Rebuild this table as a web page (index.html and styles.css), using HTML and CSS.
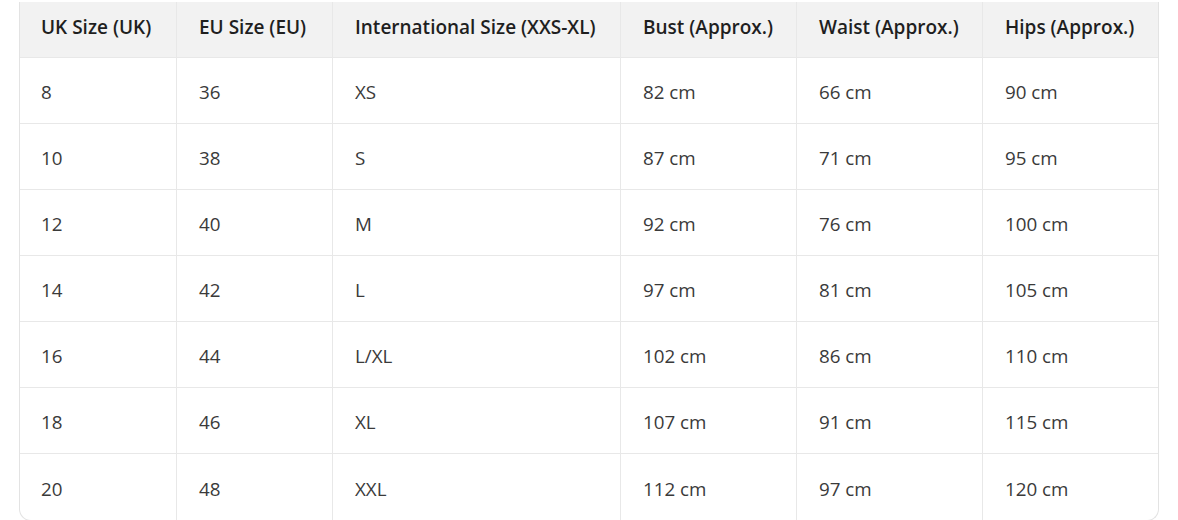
FILE: index.html
```html
<!DOCTYPE html>
<html>
<head>
<meta charset="utf-8">
<link rel="stylesheet" href="styles.css">
</head>
<body>
<div class="wrap">
  <table class="size-table">
    <colgroup>
      <col class="c1"><col class="c2"><col class="c3"><col class="c4"><col class="c5"><col class="c6">
    </colgroup>
    <thead>
      <tr><th>UK Size (UK)</th><th>EU Size (EU)</th><th>International Size (XXS-XL)</th><th>Bust (Approx.)</th><th>Waist (Approx.)</th><th>Hips (Approx.)</th></tr>
    </thead>
    <tbody>
      <tr><td>8</td><td>36</td><td>XS</td><td>82 cm</td><td>66 cm</td><td>90 cm</td></tr>
      <tr><td>10</td><td>38</td><td>S</td><td>87 cm</td><td>71 cm</td><td>95 cm</td></tr>
      <tr><td>12</td><td>40</td><td>M</td><td>92 cm</td><td>76 cm</td><td>100 cm</td></tr>
      <tr><td>14</td><td>42</td><td>L</td><td>97 cm</td><td>81 cm</td><td>105 cm</td></tr>
      <tr><td>16</td><td>44</td><td>L/XL</td><td>102 cm</td><td>86 cm</td><td>110 cm</td></tr>
      <tr><td>18</td><td>46</td><td>XL</td><td>107 cm</td><td>91 cm</td><td>115 cm</td></tr>
      <tr><td>20</td><td>48</td><td>XXL</td><td>112 cm</td><td>97 cm</td><td>120 cm</td></tr>
    </tbody>
  </table>
</div>
</body>
</html>
```
FILE: styles.css
```css
html, body {
  margin: 0;
  padding: 0;
  background: #ffffff;
}
body {
  font-family: "Open Sans", "Noto Sans", sans-serif;
  color: #333333;
}
.wrap {
  padding: 2px 0 0 19px;
}
.size-table {
  width: 1140px;
  table-layout: fixed;
  border-collapse: separate;
  border-spacing: 0;
  border: 1px solid #e3e3e3;
  border-top: none;
  border-radius: 0 0 12px 12px;
  overflow: hidden;
}
.c1 { width: 157px; }
.c2 { width: 156px; }
.c3 { width: 288px; }
.c4 { width: 176px; }
.c5 { width: 186px; }
.c6 { width: 175px; }
.size-table th,
.size-table td {
  text-align: left;
  padding: 0 0 0 22px;
  border-right: 1px solid #e8e8e8;
  border-bottom: 1px solid #e8e8e8;
  white-space: nowrap;
}
.size-table th:first-child,
.size-table td:first-child {
  padding-left: 21px;
}
.size-table th:last-child,
.size-table td:last-child {
  border-right: none;
}
.size-table tbody tr:last-child td {
  border-bottom: none;
}
.size-table th {
  height: 56px;
  padding-bottom: 5px;
  box-sizing: border-box;
  background: #f2f2f2;
  font-weight: 600;
  font-size: 19px;
  color: #1f1f1f;
}
.size-table td {
  height: 66px;
  box-sizing: border-box;
  padding-top: 3px;
  font-size: 18.8px;
  font-weight: 400;
  color: #3a3a3a;
}
```
